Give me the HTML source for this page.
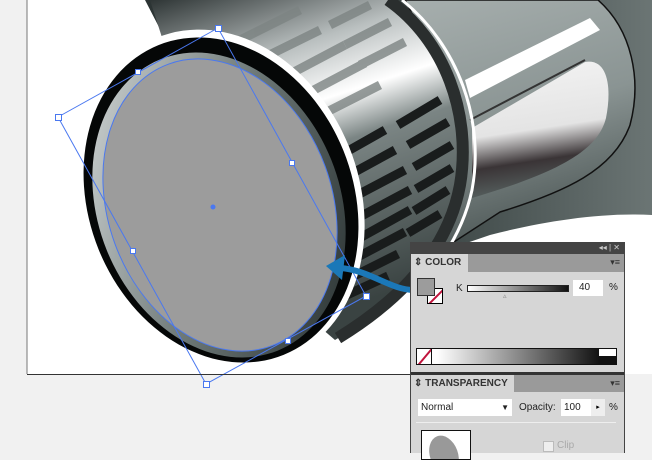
<!DOCTYPE html>
<html><head><style>
*{margin:0;padding:0;box-sizing:border-box}
body{width:652px;height:453px;overflow:hidden;background:#f1f1f1;font-family:"Liberation Sans",sans-serif;position:relative}
.a{position:absolute}
</style></head><body>
<svg class="a" style="left:0;top:0" width="652" height="453" viewBox="0 0 652 453">
<defs>
<linearGradient id="bg" x1="0" y1="0" x2="1" y2="0"><stop offset="0" stop-color="#2c3434"/><stop offset="0.6" stop-color="#404a49"/><stop offset="1" stop-color="#6b7574"/></linearGradient>
<linearGradient id="cyl" x1="0" y1="0" x2="0.3" y2="1"><stop offset="0" stop-color="#2e3535"/><stop offset="0.25" stop-color="#b8bebe"/><stop offset="0.42" stop-color="#ffffff"/><stop offset="0.55" stop-color="#7b8584"/><stop offset="1" stop-color="#3a4342"/></linearGradient>
<linearGradient id="hnd" x1="0" y1="0" x2="0.25" y2="1"><stop offset="0" stop-color="#a8b0af"/><stop offset="0.5" stop-color="#8a9493"/><stop offset="1" stop-color="#3e4847"/></linearGradient>
<linearGradient id="bul" x1="0" y1="0" x2="0.15" y2="1"><stop offset="0" stop-color="#f4f4f4"/><stop offset="0.55" stop-color="#e4e4e4"/><stop offset="0.78" stop-color="#3a3436"/><stop offset="1" stop-color="#56605f"/></linearGradient>
<linearGradient id="rim" x1="0" y1="0" x2="1" y2="1"><stop offset="0" stop-color="#e0e4e4"/><stop offset="0.5" stop-color="#6d7877"/><stop offset="1" stop-color="#1e2626"/></linearGradient>
</defs>
<rect x="27" y="0" width="625" height="374" fill="#fff"/>
<path d="M145 0 H652 V215 C600 212 540 222 490 235 L300 300 Z" fill="url(#bg)"/>
<path d="M405 0 H598 C632 30 642 80 630 125 C614 170 565 192 500 212 L380 290 C440 220 470 120 405 0 Z" fill="url(#hnd)" stroke="#111" stroke-width="1.5"/>
<path d="M465 80 L590 18 L600 30 L470 98 Z" fill="#fff"/>
<path d="M472 128 L585 62 C608 58 612 88 606 118 C598 150 560 172 472 198 Z" fill="url(#bul)"/>
<path d="M470 120 L585 60" stroke="#333" stroke-width="2"/>
<path d="M150 0 H390 C450 40 475 120 460 190 C445 250 400 300 335 340 L230 250 Z" fill="url(#cyl)"/>
<g stroke="#191c1c" stroke-width="9" fill="none">
<path d="M332 160 L385 130 M340 180 L395 150 M348 200 L405 170 M354 220 L410 190 M356 240 L410 210 M352 260 L405 232 M346 280 L398 254 M336 300 L388 276"/>
<path d="M398 125 L440 100 M408 145 L448 122 M414 167 L452 145 M416 189 L452 168 M414 211 L448 190 M408 233 L440 214"/>
</g>
<g stroke="#7d8483" stroke-width="9" fill="none" opacity="0.8">
<path d="M230 45 L300 10 M255 62 L320 30 M275 82 L345 45 M295 100 L365 63 M315 118 L380 85"/>
<path d="M330 25 L370 5 M345 45 L390 22 M360 65 L405 42"/>
</g>
<path d="M388 0 C445 40 472 115 460 185 C448 250 400 300 338 338" stroke="#2a2e2e" stroke-width="12" fill="none"/>
<path d="M402 0 C458 45 485 120 472 190 C458 255 410 305 345 345" stroke="#fff" stroke-width="3" fill="none"/>
<ellipse cx="222" cy="198" rx="137" ry="173" transform="rotate(-22 222 198)" fill="#fff"/>
<ellipse cx="221" cy="200" rx="132" ry="167" transform="rotate(-22 221 200)" fill="#050707"/>
<ellipse cx="219" cy="205" rx="121" ry="157" transform="rotate(-22 219 205)" fill="url(#rim)"/>
<ellipse cx="220" cy="205" rx="112" ry="150" transform="rotate(-20 220 205)" fill="#9c9c9c"/>
<g stroke="#4a78f0" fill="none" stroke-width="1">
<ellipse cx="220" cy="205" rx="112" ry="150" transform="rotate(-20 220 205)"/>
<path d="M58 117 L218 28 L366 296 L206 384 Z"/>
</g>
<g fill="#fff" stroke="#4a78f0">
<rect x="55.5" y="114.5" width="6" height="6"/><rect x="215.5" y="25.5" width="6" height="6"/><rect x="363.5" y="293.5" width="6" height="6"/><rect x="203.5" y="381.5" width="6" height="6"/>
<rect x="135.5" y="69.5" width="5" height="5"/><rect x="289.5" y="160.5" width="5" height="5"/><rect x="130.5" y="248.5" width="5" height="5"/><rect x="285.5" y="338.5" width="5" height="5"/>
</g>
<circle cx="213" cy="207" r="2.5" fill="#4a78f0"/>
<line x1="27" y1="0" x2="27" y2="374" stroke="#777"/>
<line x1="27" y1="374.5" x2="410" y2="374.5" stroke="#333"/>
<path d="M414 290 C390 290 370 270 340 268" stroke="#1b78b8" stroke-width="6" fill="none" stroke-linecap="round"/>
<path d="M326 266 L345 255 L342 280 Z" fill="#1b78b8"/>
</svg>

<div class="a" style="left:410px;top:242px;width:215px;height:211px;background:#d6d6d6;border-left:1px solid #444;border-right:1px solid #444">
 <div class="a" style="left:0;top:0;width:213px;height:12px;background:#444;color:#ccc;font-size:8px;text-align:right;padding-right:4px;line-height:12px">◂◂ | ✕</div>
 <div class="a" style="left:0;top:12px;width:213px;height:18px;background:#9a9a9a"></div>
 <div class="a" style="left:0;top:12px;width:57px;height:18px;background:#d6d6d6;font-size:10px;font-weight:bold;color:#333;line-height:18px;padding-left:3px">⇕ COLOR</div>
 <div class="a" style="right:4px;top:15px;font-size:9px;color:#333">▾≡</div>
 <div class="a" style="left:16px;top:46px;width:16px;height:16px;background:#fff;border:1px solid #000;overflow:hidden"><div style="position:absolute;left:-4px;top:7px;width:24px;height:2px;background:#c0143c;transform:rotate(-45deg)"></div></div>
 <div class="a" style="left:6px;top:36px;width:18px;height:18px;background:#9c9c9c;border:1px solid #333"></div>
 <div class="a" style="left:45px;top:41px;font-size:10px;color:#222">K</div>
 <div class="a" style="left:56px;top:43px;width:102px;height:7px;border:1px solid #222;background:linear-gradient(90deg,#fff,#111)"></div>
 <div class="a" style="left:92px;top:50px;font-size:7px;color:#888">▵</div>
 <div class="a" style="left:162px;top:38px;width:30px;height:16px;background:#fff;font-size:10px;line-height:16px;padding-left:6px;color:#222">40</div>
 <div class="a" style="left:198px;top:40px;font-size:10px;color:#222">%</div>
 <div class="a" style="left:5px;top:106px;width:201px;height:17px;border:1px solid #111;background:linear-gradient(90deg,#fff 8%,#fff 10%,#111 92%)"></div>
 <div class="a" style="left:5px;top:106px;width:16px;height:17px;background:#fff;border:1px solid #111;overflow:hidden"><div style="position:absolute;left:-4px;top:7px;width:24px;height:2px;background:#c0143c;transform:rotate(-50deg)"></div></div>
 <div class="a" style="left:188px;top:107px;width:17px;height:7px;background:#fff"></div>
 <div class="a" style="left:0;top:130px;width:213px;height:3px;background:#333"></div>
 <div class="a" style="left:0;top:133px;width:213px;height:17px;background:#9a9a9a"></div>
 <div class="a" style="left:0;top:133px;width:103px;height:17px;background:#d6d6d6;font-size:10px;font-weight:bold;color:#333;line-height:17px;padding-left:3px">⇕ TRANSPARENCY</div>
 <div class="a" style="right:4px;top:136px;font-size:9px;color:#333">▾≡</div>
 <div class="a" style="left:7px;top:157px;width:94px;height:17px;background:#fff;font-size:10px;line-height:17px;padding-left:3px;color:#222">Normal<span style="position:absolute;right:3px;font-size:8px">▼</span></div>
 <div class="a" style="left:108px;top:160px;font-size:10px;color:#222">Opacity:</div>
 <div class="a" style="left:150px;top:157px;width:30px;height:17px;background:#fff;font-size:10px;line-height:17px;padding-left:3px;color:#222">100</div>
 <div class="a" style="left:180px;top:157px;width:14px;height:17px;background:#eee;font-size:7px;line-height:17px;text-align:center">▸</div>
 <div class="a" style="left:198px;top:160px;font-size:10px;color:#222">%</div>
 <div class="a" style="left:5px;top:180px;width:200px;height:1px;background:#eee"></div>
 <div class="a" style="left:10px;top:188px;width:50px;height:30px;background:#fff;border:1px solid #111;overflow:hidden"><div style="position:absolute;left:8px;top:4px;width:28px;height:40px;border-radius:50%;background:#999;transform:rotate(-20deg)"></div></div>
 <div class="a" style="left:132px;top:199px;width:11px;height:11px;background:#eee;border:1px solid #bbb"></div>
 <div class="a" style="left:146px;top:198px;font-size:10px;color:#aaa">Clip</div>
</div>
</body></html>
